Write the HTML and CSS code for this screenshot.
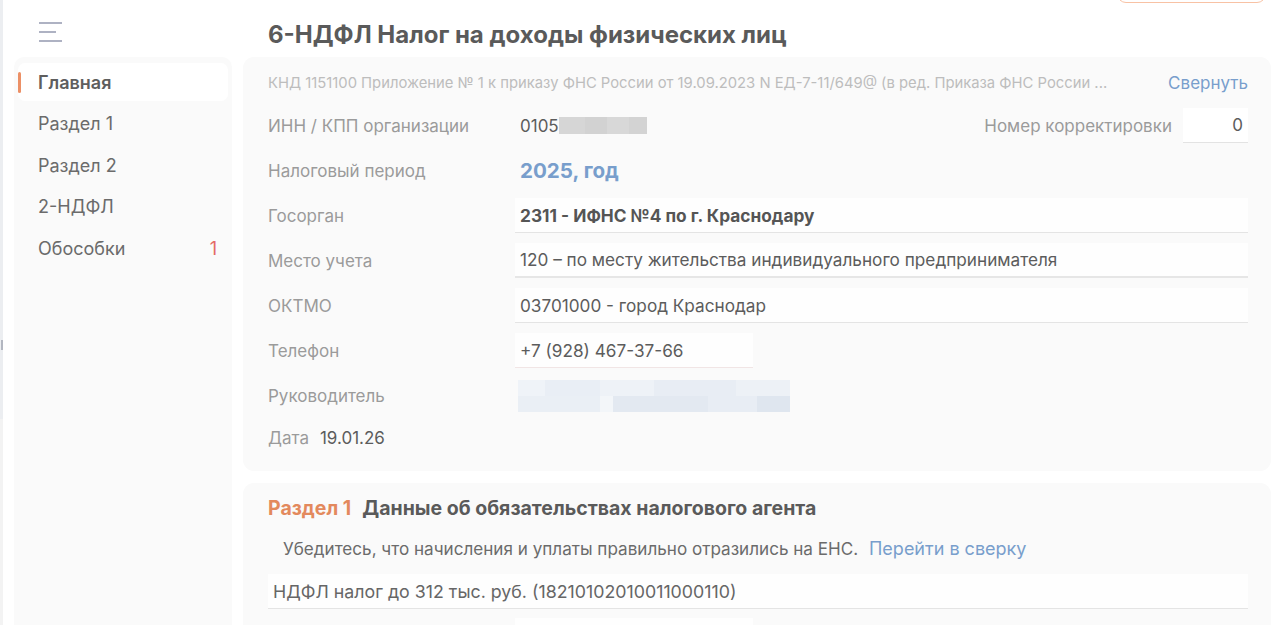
FILE: index.html
```html
<!DOCTYPE html>
<html lang="ru">
<head>
<meta charset="utf-8">
<title>6-НДФЛ</title>
<link rel="stylesheet" href="styles.css">
</head>
<body>
<div class="app">
  <div class="edge">
    <div class="edge-top"><div class="thumb"></div></div>
    <div class="edge-bottom"></div>
  </div>

  <aside class="sidebar">
    <div class="side-head">
      <svg class="burger" width="24" height="21" viewBox="0 0 24 21">
        <rect x="0" y="0" width="23" height="2" fill="#aeb2c3"/>
        <rect x="0" y="9" width="17" height="2" fill="#aeb2c3"/>
        <rect x="0" y="18" width="23" height="2" fill="#aeb2c3"/>
      </svg>
    </div>
    <nav class="nav">
      <div class="nav-item active">Главная</div>
      <div class="nav-item">Раздел 1</div>
      <div class="nav-item">Раздел 2</div>
      <div class="nav-item">2-НДФЛ</div>
      <div class="nav-item">Обособки <span class="count">1</span></div>
    </nav>
  </aside>

  <main class="main">
    <header class="main-head">
      <h1 class="title">6-НДФЛ Налог на доходы физических лиц</h1>
      <div class="top-btn"></div>
    </header>

    <section class="card">
      <div class="knd-row">
        <span class="knd">КНД 1151100 Приложение № 1 к приказу ФНС России от 19.09.2023 N ЕД-7-11/649@ (в ред. Приказа ФНС России ...</span>
        <a class="link">Свернуть</a>
      </div>

      <div class="row">
        <span class="label">ИНН / КПП организации</span>
        <div class="inn">
          <span class="plain">0105</span><span class="blur-inn"></span>
          <span class="corr-label">Номер корректировки</span>
          <span class="corr-box">0</span>
        </div>
      </div>

      <div class="row">
        <span class="label">Налоговый период</span>
        <span class="period">2025, год</span>
      </div>

      <div class="row">
        <span class="label">Госорган</span>
        <div class="field bold">2311 - ИФНС №4 по г. Краснодару</div>
      </div>

      <div class="row">
        <span class="label">Место учета</span>
        <div class="field thick">120 – по месту жительства индивидуального предпринимателя</div>
      </div>

      <div class="row">
        <span class="label">ОКТМО</span>
        <div class="field">03701000 - город Краснодар</div>
      </div>

      <div class="row">
        <span class="label">Телефон</span>
        <div class="field phone">+7 (928) 467-37-66</div>
      </div>

      <div class="row">
        <span class="label">Руководитель</span>
        <div class="blur-boss"><span></span><span></span></div>
      </div>

      <div class="date-row">
        <span class="label">Дата</span>
        <span class="plain">19.01.26</span>
      </div>
    </section>

    <section class="card card2">
      <h2 class="sec-title"><span class="sec-num">Раздел 1</span> Данные об обязательствах налогового агента</h2>
      <p class="note">Убедитесь, что начисления и уплаты правильно отразились на ЕНС. <a class="link">Перейти в сверку</a></p>
      <div class="field kbk">НДФЛ налог до 312 тыс. руб. (18210102010011000110)</div>
      <div class="row next-row">
        <span class="label"></span>
        <div class="field short"></div>
      </div>
    </section>
  </main>
</div>
</body>
</html>
```

FILE: styles.css
```css
* { box-sizing: border-box; }
html, body { margin: 0; padding: 0; height: 100%; overflow: hidden; }
body {
  font-family: Inter, "Noto Sans", sans-serif;
  background: #ffffff;
  color: #555;
}

.app {
  display: flex;
  height: 625px;
}

/* left edge strip */
.edge {
  width: 3px;
  flex-shrink: 0;
  display: flex;
  flex-direction: column;
}
.edge-top {
  height: 419px;
  flex-shrink: 0;
  background: #eceef1;
  padding-top: 340px;
}
.thumb {
  width: 2px;
  height: 10px;
  margin-left: 1px;
  background: #b3b7c1;
}
.edge-bottom {
  flex: 1;
  background: #f3f3f3;
}

/* sidebar */
.sidebar {
  width: 218px;
  flex-shrink: 0;
  margin-left: 11px;
  display: flex;
  flex-direction: column;
}
.side-head {
  height: 57px;
  flex-shrink: 0;
  padding: 22px 0 0 25px;
}
.burger { display: block; }

.nav {
  flex: 1;
  background: #fafafa;
  border-radius: 10px 10px 0 0;
  padding: 6px 4px;
}
.nav-item {
  height: 38px;
  margin-bottom: 3.5px;
  display: flex;
  align-items: center;
  font-size: 18px;
  color: #6b6b6b;
  border-radius: 7px;
}
.nav-item::before {
  content: "";
  width: 3px;
  height: 21px;
  margin-right: 17px;
  border-radius: 2px;
  background: transparent;
}
.nav-item.active {
  background: #ffffff;
  font-weight: 600;
  color: #5e5e5e;
}
.nav-item.active::before { background: #ec9066; }
.count {
  margin-left: auto;
  margin-right: 11px;
  color: #e46a66;
}

/* main */
.main {
  flex: 1;
  margin-left: 11px;
  margin-right: 1px;
  display: flex;
  flex-direction: column;
  min-width: 0;
}
.main > * { flex-shrink: 0; }
.main-head {
  height: 57px;
  display: flex;
  align-items: flex-start;
}
.title {
  margin: 21px 0 0 25px;
  font-size: 24px;
  line-height: 28px;
  font-weight: 700;
  color: #5a5a5a;
}
.top-btn {
  margin-left: auto;
  margin-right: 5px;
  margin-top: -30px;
  width: 149px;
  height: 33px;
  border: 1px solid #f8c2a4;
  border-radius: 9px;
}

.card {
  background: #fafafa;
  border-radius: 11px;
  padding: 14px 23px 18px 25px;
}

.knd-row {
  height: 24px;
  display: flex;
  align-items: center;
  justify-content: space-between;
  margin-bottom: 13px;
}
.knd {
  font-size: 14.8px;
  color: #bdbdbd;
}
.link {
  color: #789ecc;
  font-size: 17px;
  cursor: pointer;
}

.row {
  display: grid;
  grid-template-columns: 247px 1fr;
  align-items: center;
  min-height: 35px;
  margin-bottom: 10px;
}
.label {
  font-size: 17px;
  color: #9b9b9b;
}
.plain {
  font-size: 17px;
  color: #5c5c5c;
}

.inn {
  display: flex;
  align-items: center;
  padding-left: 5px;
}
.blur-inn {
  width: 88px;
  height: 17px;
  background: linear-gradient(90deg, #d6d6d6 0 30%, #d2d2d2 30% 55%, #d8d8d8 55% 80%, #d3d3d3 80%);
}
.corr-label {
  margin-left: auto;
  font-size: 17px;
  color: #9b9b9b;
}
.corr-box {
  width: 65px;
  height: 35px;
  margin-left: 11px;
  background: #ffffff;
  border-bottom: 1px solid #e3e3e3;
  display: flex;
  align-items: center;
  justify-content: flex-end;
  padding-right: 5px;
  font-size: 17px;
  color: #5c5c5c;
}

.period {
  padding-left: 5px;
  font-size: 20.6px;
  font-weight: 700;
  color: #789ecc;
}

.field {
  height: 35px;
  background: #fefefe;
  border-bottom: 1px solid #e4e4e4;
  display: flex;
  align-items: center;
  padding-left: 5px;
  font-size: 17.2px;
  color: #5c5c5c;
}
.field.bold { font-weight: 700; color: #555; font-size: 17.3px; }
.field.thick { border-bottom: 2px solid #e6e6e6; }
.field.phone {
  width: 238px;
  border-bottom-color: #f1e5e5;
}

.blur-boss {
  margin-left: 3px;
  width: 272px;
  height: 32px;
  display: flex;
  flex-direction: column;
}
.blur-boss span { flex: 1; }
.blur-boss span:first-child {
  background: linear-gradient(90deg, #eff3f8 0 10%, #e9eef5 10% 30%, #eef2f7 30% 50%, #e8edf4 50% 80%, #edf1f6 80%);
}
.blur-boss span:last-child {
  background: linear-gradient(90deg, #eaeff5 0 30%, #f3f6f9 30% 35%, #e3e9f1 35% 70%, #e8edf4 70% 88%, #dfe6ef 88%);
}

.date-row {
  height: 30px;
  display: flex;
  align-items: center;
  gap: 11px;
}

/* card 2 */
.card2 {
  margin-top: 12px;
  flex: 1 0 auto;
  border-radius: 11px 11px 0 0;
}
.sec-title {
  margin: 0;
  height: 22px;
  display: flex;
  align-items: center;
  gap: 11px;
  font-size: 19.5px;
  font-weight: 700;
  color: #5a5a5a;
}
.sec-num { color: #e3895d; }
.note {
  margin: 18px 0 0 15px;
  height: 24px;
  line-height: 24px;
  font-size: 17.1px;
  color: #6b6b6b;
}
.note .link { margin-left: 6px; font-size: 18px; }
.kbk {
  margin-top: 13px;
  height: 35px;
  font-size: 17.8px;
  color: #666;
}
.next-row { margin-top: 9px; }
.field.short { width: 238px; border-bottom: none; }
```
